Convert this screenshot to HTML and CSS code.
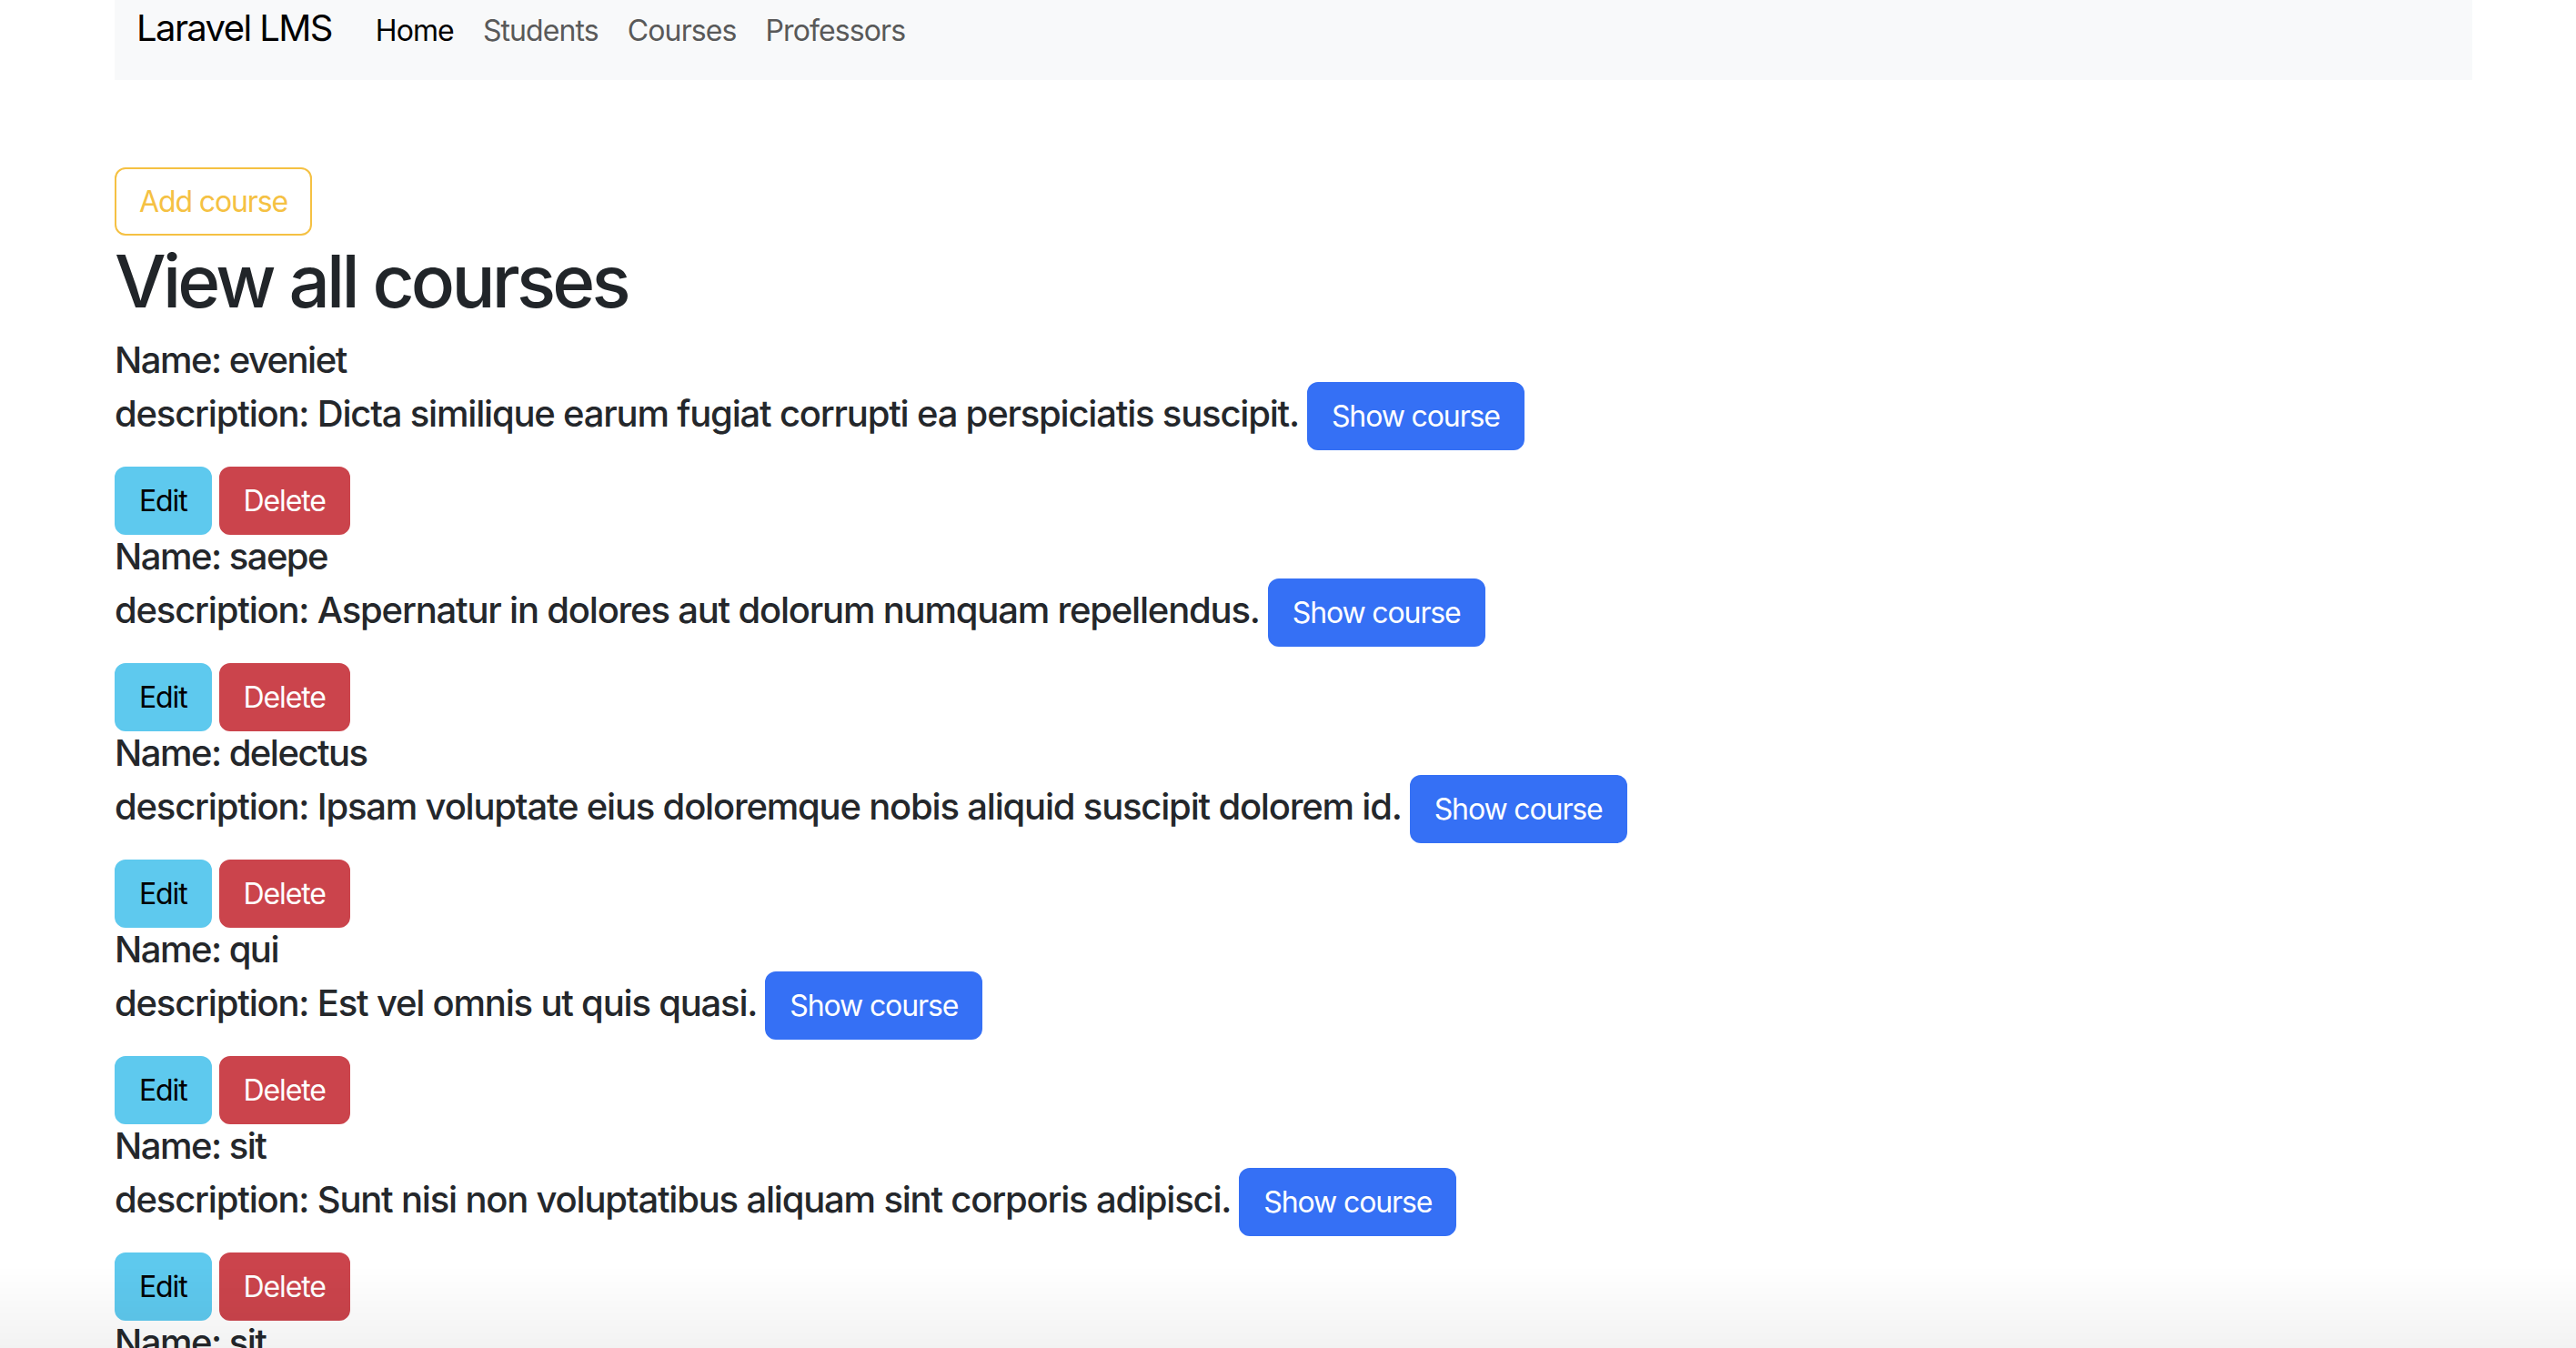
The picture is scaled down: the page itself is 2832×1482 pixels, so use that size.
FILE: index.html
```html
<!DOCTYPE html>
<html lang="en">
<head>
<meta charset="utf-8">
<title>Laravel LMS</title>
<link rel="stylesheet" href="styles.css">
</head>
<body>
<div class="container">
  <nav class="navbar">
    <a class="brand" href="#">Laravel LMS</a>
    <ul class="nav">
      <li><a class="nav-link active" href="#">Home</a></li>
      <li><a class="nav-link" href="#">Students</a></li>
      <li><a class="nav-link" href="#">Courses</a></li>
      <li><a class="nav-link" href="#">Professors</a></li>
    </ul>
  </nav>
</div>
<main class="container content">
  <div class="toolbar"><a class="btn btn-outline-warning" href="#">Add course</a></div>
  <h1 class="title">View all courses</h1>

  <div class="course">
    <h5 class="course-name">Name: eveniet</h5>
    <h5 class="course-desc">description: Dicta similique earum fugiat corrupti ea perspiciatis suscipit. <a class="btn btn-primary" href="#">Show course</a></h5>
    <div class="actions"><a class="btn btn-info" href="#">Edit</a><button class="btn btn-danger" type="button">Delete</button></div>
  </div>

  <div class="course">
    <h5 class="course-name">Name: saepe</h5>
    <h5 class="course-desc">description: Aspernatur in dolores aut dolorum numquam repellendus. <a class="btn btn-primary" href="#">Show course</a></h5>
    <div class="actions"><a class="btn btn-info" href="#">Edit</a><button class="btn btn-danger" type="button">Delete</button></div>
  </div>

  <div class="course">
    <h5 class="course-name">Name: delectus</h5>
    <h5 class="course-desc">description: Ipsam voluptate eius doloremque nobis aliquid suscipit dolorem id. <a class="btn btn-primary" href="#">Show course</a></h5>
    <div class="actions"><a class="btn btn-info" href="#">Edit</a><button class="btn btn-danger" type="button">Delete</button></div>
  </div>

  <div class="course">
    <h5 class="course-name">Name: qui</h5>
    <h5 class="course-desc">description: Est vel omnis ut quis quasi. <a class="btn btn-primary" href="#">Show course</a></h5>
    <div class="actions"><a class="btn btn-info" href="#">Edit</a><button class="btn btn-danger" type="button">Delete</button></div>
  </div>

  <div class="course">
    <h5 class="course-name">Name: sit</h5>
    <h5 class="course-desc">description: Sunt nisi non voluptatibus aliquam sint corporis adipisci. <a class="btn btn-primary" href="#">Show course</a></h5>
    <div class="actions"><a class="btn btn-info" href="#">Edit</a><button class="btn btn-danger" type="button">Delete</button></div>
  </div>

  <div class="course">
    <h5 class="course-name">Name: sit</h5>
    <h5 class="course-desc">description: Qui aut et voluptas quia. <a class="btn btn-primary" href="#">Show course</a></h5>
    <div class="actions"><a class="btn btn-info" href="#">Edit</a><button class="btn btn-danger" type="button">Delete</button></div>
  </div>
</main>
<div class="bottom-shade"></div>
</body>
</html>
```

FILE: styles.css
```css
* { box-sizing: border-box; }

html, body {
  margin: 0;
  padding: 0;
  background: #ffffff;
}

body {
  font-family: Inter, "Noto Sans", "Liberation Sans", sans-serif;
  font-size: 32px;
  line-height: 48px;
  color: #24272b;
  letter-spacing: -0.03em;
  overflow: hidden;
}

.container {
  width: 2592px;
  margin-left: 126px;
}

/* Navbar */
.navbar {
  height: 88px;
  background: #f8f9fa;
  display: flex;
  align-items: baseline;
  padding: 7px 24px 0 24px;
}

.brand {
  font-size: 40px;
  line-height: 48px;
  color: #000000;
  text-decoration: none;
  margin-right: 32px;
  letter-spacing: -0.04em;
}

.nav {
  list-style: none;
  margin: 0;
  padding: 0;
  display: flex;
  align-items: baseline;
}

.nav-link {
  display: block;
  padding: 0 16px;
  font-size: 32px;
  line-height: 48px;
  color: #595959;
  text-decoration: none;
  letter-spacing: -0.028em;
}

.nav-link.active {
  color: #000000;
}

/* Content */
.content {
  padding-top: 96px;
}

.toolbar {
  display: flex;
}

.title {
  font-size: 80px;
  line-height: 96px;
  font-weight: 500;
  margin: 0 0 15px 0;
  padding-top: 2px;
  color: #212529;
  letter-spacing: -0.047em;
}

.course-name {
  font-size: 40px;
  line-height: 48px;
  font-weight: 500;
  margin: 0;
  letter-spacing: -0.038em;
}

.course-desc {
  font-size: 40px;
  line-height: 48px;
  font-weight: 500;
  margin: 0 0 18px 0;
  letter-spacing: -0.03em;
}

.actions {
  display: flex;
  gap: 8px;
}

/* Buttons */
.btn {
  display: inline-block;
  font-family: Inter, "Noto Sans", "Liberation Sans", sans-serif;
  font-size: 32px;
  line-height: 48px;
  font-weight: 400;
  letter-spacing: -0.035em;
  padding: 11.5px 25px;
  border: 2px solid transparent;
  border-radius: 12px;
  text-decoration: none;
  vertical-align: baseline;
  cursor: pointer;
}

.btn-outline-warning {
  color: #f5c143;
  border-color: #f5c143;
  background: transparent;
}

.btn-primary {
  color: #ffffff;
  background: #3570f5;
  border-color: #3570f5;
}

.btn-info {
  color: #000000;
  background: #5ec9ee;
  border-color: #5ec9ee;
}

.btn-danger {
  color: #ffffff;
  background: #cb444c;
  border-color: #cb444c;
}

/* Faint shadow along the bottom edge of the capture */
.bottom-shade {
  position: fixed;
  left: 0;
  right: 0;
  bottom: 0;
  height: 90px;
  background: linear-gradient(to bottom, rgba(0, 0, 0, 0), rgba(0, 0, 0, 0.05));
  pointer-events: none;
}
```
